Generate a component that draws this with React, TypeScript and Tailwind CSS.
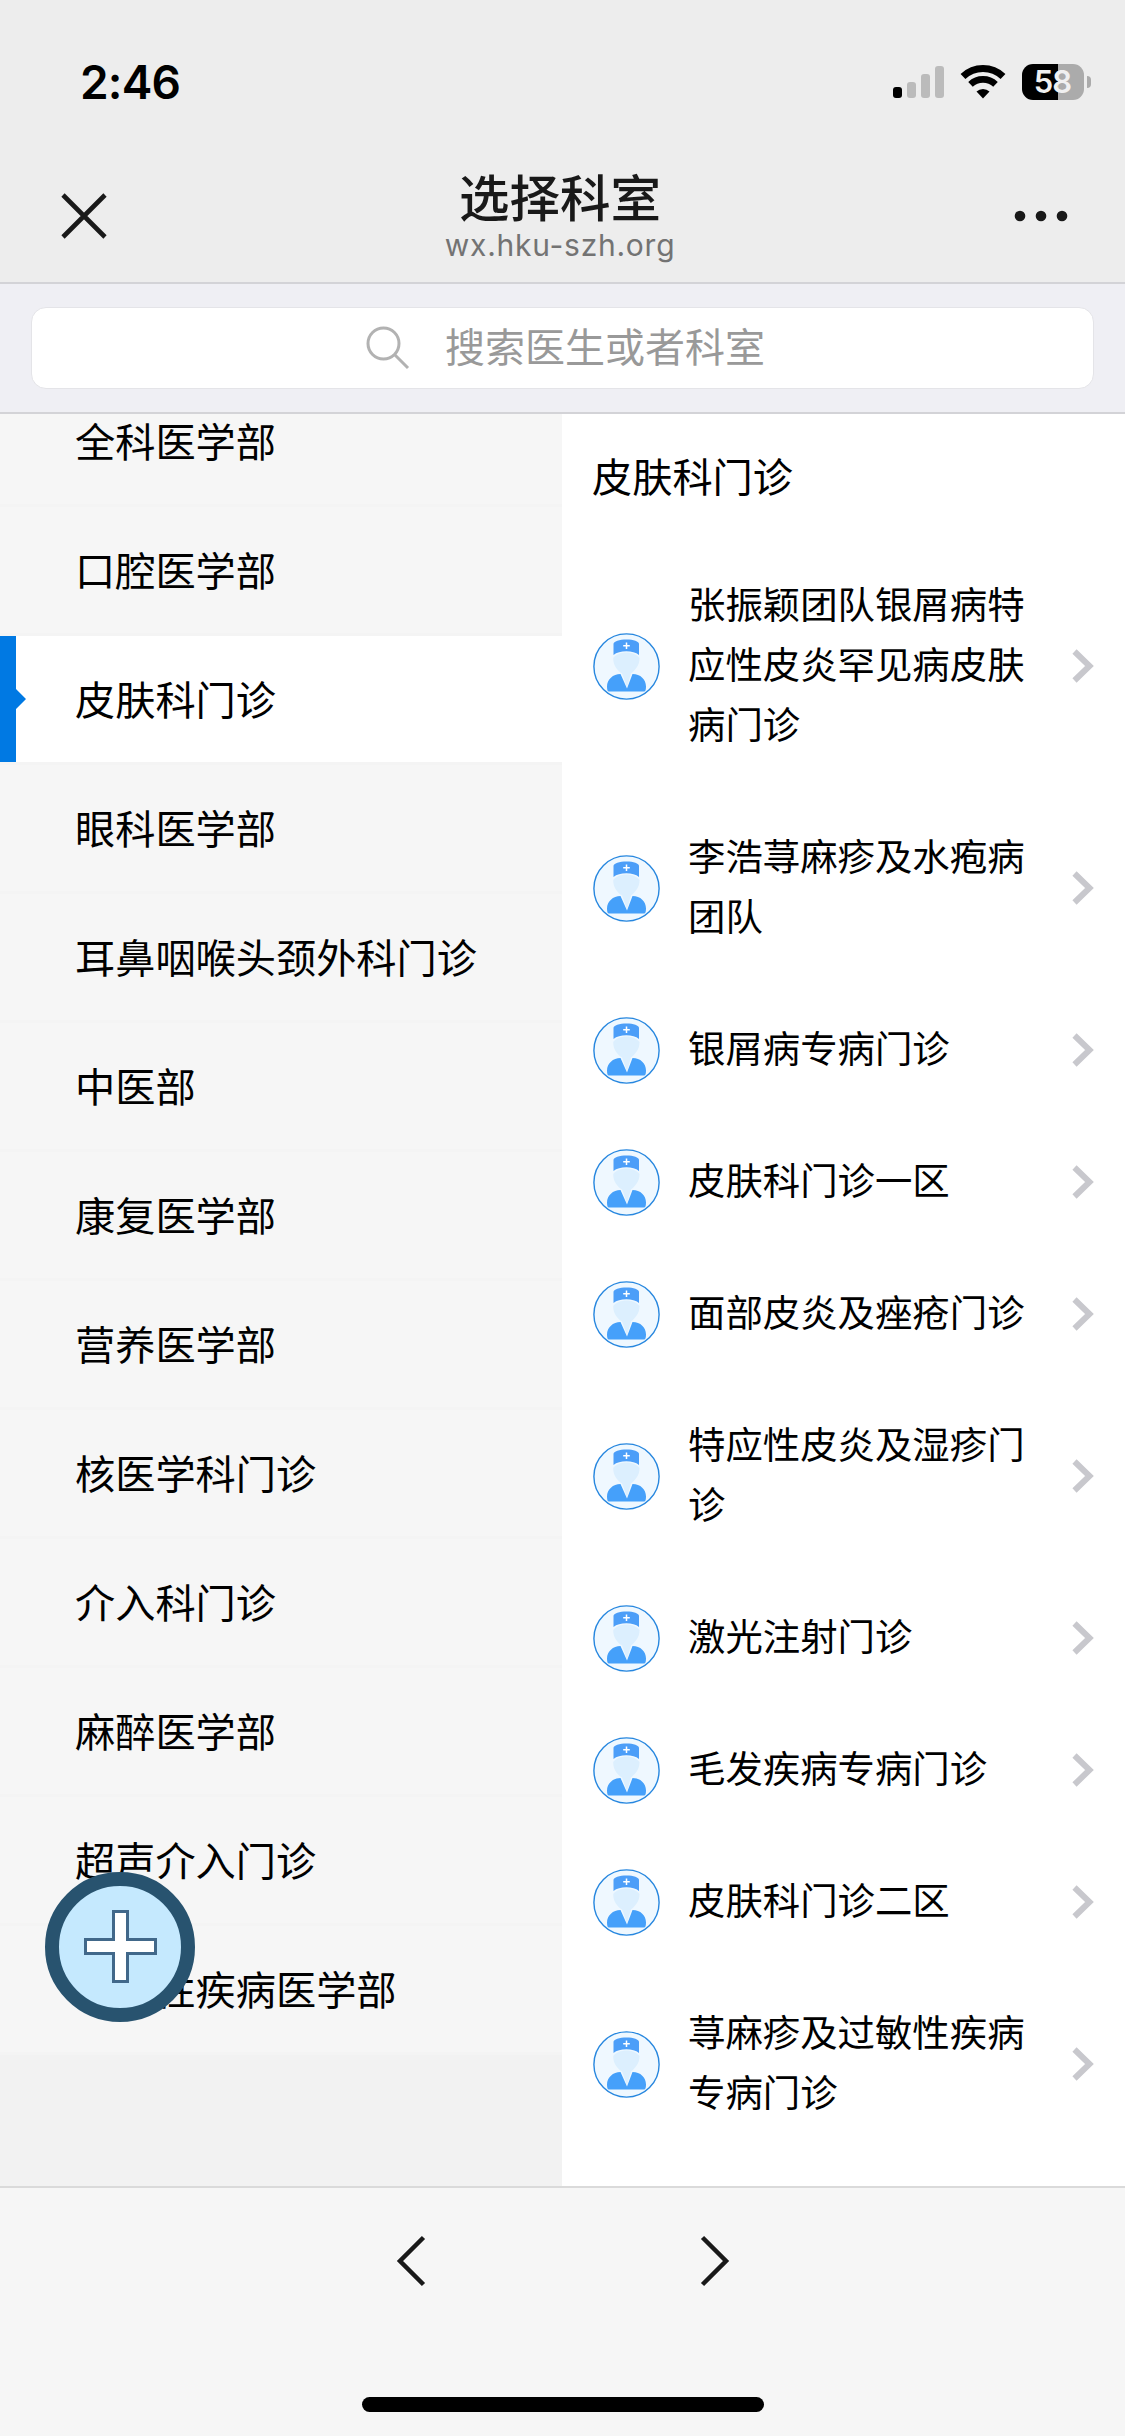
type Clinic = {
  name: string;
};

const departments: string[] = [
  '全科医学部',
  '口腔医学部',
  '皮肤科门诊',
  '眼科医学部',
  '耳鼻咽喉头颈外科门诊',
  '中医部',
  '康复医学部',
  '营养医学部',
  '核医学科门诊',
  '介入科门诊',
  '麻醉医学部',
  '超声介入门诊',
  '感染性疾病医学部',
];

const clinics: Clinic[] = [
  { name: '张振颖团队银屑病特应性皮炎罕见病皮肤病门诊' },
  { name: '李浩荨麻疹及水疱病团队' },
  { name: '银屑病专病门诊' },
  { name: '皮肤科门诊一区' },
  { name: '面部皮炎及痤疮门诊' },
  { name: '特应性皮炎及湿疹门诊' },
  { name: '激光注射门诊' },
  { name: '毛发疾病专病门诊' },
  { name: '皮肤科门诊二区' },
  { name: '荨麻疹及过敏性疾病专病门诊' },
];

const active = '皮肤科门诊';

function StatusBar() {
  return (
    <div className="flex h-[164px] items-start justify-between pl-[80px] pr-[34px] pt-[64px] font-['Inter',sans-serif]">
      <span className="text-[46px] font-semibold leading-[36px] tracking-[-0.8px] text-black">2:46</span>
      <div className="flex h-9 items-center">
        <svg className="h-9 w-[51px]" viewBox="0 0 51 36">
          <rect x="0" y="23" width="9" height="11" rx="3" fill="#000" />
          <rect x="14" y="18" width="9" height="16" rx="3" fill="#bbb" />
          <rect x="28" y="10" width="9" height="24" rx="3" fill="#bbb" />
          <rect x="42" y="2" width="9" height="32" rx="3" fill="#bbb" />
        </svg>
        <svg className="ml-4 h-9 w-[46px]" viewBox="0 0 46 36" fill="none">
          <path d="M3 12.5a29 29 0 0 1 40 0" stroke="#000" strokeWidth="7" />
          <path d="M10.5 20.3a18.2 18.2 0 0 1 25 0" stroke="#000" strokeWidth="6.6" />
          <path d="M16.5 27.5a9.5 9.5 0 0 1 13 0L23 34.5z" fill="#000" />
        </svg>
        <div className="ml-4 flex h-9 w-[62px] items-center justify-center rounded-[11px] bg-[linear-gradient(to_right,#000_36px,#ababab_36px)] pr-px text-[31px] font-semibold tracking-[-1px] text-[#f0f0f0]">
          58
        </div>
        <div className="ml-[3px] h-3 w-1 rounded-r-full bg-[#ababab]" />
      </div>
    </div>
  );
}

function TitleBar() {
  return (
    <div className="flex h-[118px] items-start justify-between px-[56px]">
      <svg className="mt-[24px] h-14 w-14" viewBox="0 0 56 56" fill="none" stroke="#191919" strokeWidth="4.6">
        <path d="M7 7l42 42M49 7L7 49" />
      </svg>
      <div className="flex flex-col items-center pr-[5px]">
        <h1 className="mt-[6px] text-[50.5px] font-medium leading-[50px] text-[#191919]">选择科室</h1>
        <p className="mt-3 font-['Inter',sans-serif] text-[30px] leading-[26px] tracking-[0.75px] text-[#737373]">wx.hku-szh.org</p>
      </div>
      <svg className="mt-[24px] h-14 w-14" viewBox="0 0 56 56" fill="#191919">
        <circle cx="7" cy="28" r="5.3" />
        <circle cx="28" cy="28" r="5.3" />
        <circle cx="49" cy="28" r="5.3" />
      </svg>
    </div>
  );
}

function SearchBar() {
  return (
    <div className="h-[132px] border-y-2 border-[#d3d3d7] bg-[#efeff4] px-[31px] pt-[23px]">
      <div className="flex h-[82px] items-center rounded-[15px] border border-[#e4e4e8] bg-white pl-[334px]">
        <svg className="h-[44px] w-[44px]" viewBox="0 0 44 44" fill="none" stroke="#b2b2b2" strokeWidth="3">
          <circle cx="17.5" cy="17.5" r="15.5" />
          <path d="M28.5 28.5L42 42" />
        </svg>
        <span className="ml-[35px] pb-[6px] text-[40px] text-[#999]">搜索医生或者科室</span>
      </div>
    </div>
  );
}

function DoctorIcon() {
  return (
    <svg className="-my-1 h-[67px] w-[67px] shrink-0" viewBox="0 0 67 67">
      <circle cx="33.5" cy="33.5" r="32.6" fill="#eff8ff" stroke="#2787df" strokeWidth="1.4" />
      <path d="M20.5 22V11c0-2.5 6-4.5 13-4.5S46 8.500 46 11v11c-3-2.5-7.5-3.700-12.700-3.700S23.500 19.500 20.500 22z" fill="#4c9ef8" />
      <path d="M33.5 9.500v6.600M30.200 12.800h6.600" stroke="#fff" strokeWidth="1.5" />
      <path d="M20.2 25c2.500-3.500 7.500-5.600 13.100-5.600S44 21.500 46.500 25c.3 8-5.500 13-8.500 15.500L34 54l-5-13.500C25 38 20 33 20.200 25z" fill="#dceffe" />
      <path d="M27.5 41L34 55.500 39.500 41c8 0 13.500 5.500 13.500 12.500 0 3-.5 5-2 5H16c-1.500 0-2-2-2-5C14 46.500 20 41 27.500 41z" fill="#45a0fa" />
    </svg>
  );
}

function DepartmentList() {
  return (
    <nav className="w-[562px] shrink-0 overflow-hidden bg-[#f2f2f2]">
      {/* list is scrolled, the first row slides under the search bar */}
      <ul className="-mt-[36px]">
        {departments.map((name) => (
          <li
            key={name}
            className={`relative flex h-[129px] items-center border-b-[3px] border-[#f4f4f4] pb-[3px] pl-[75px] text-[40.2px] leading-[44px] ${name === active ? 'bg-white' : 'bg-[#f6f6f6]'}`}
          >
            {name === active && (
              <svg className="absolute left-0 top-0 h-[126px] w-[26px]" viewBox="0 0 26 126" fill="#0079e3">
                <path d="M0 0h16v53l10 10-10 10v53H0z" />
              </svg>
            )}
            {name}
          </li>
        ))}
      </ul>
    </nav>
  );
}

function ClinicList() {
  return (
    <section className="flex-1 bg-white px-[31px]">
      <h2 className="-ml-px flex h-[126px] items-center pb-[3px] text-[40.2px]">皮肤科门诊</h2>
      <ul>
        {clinics.map(({ name }) => (
          <li key={name} className="flex items-center py-[36px]">
            <DoctorIcon />
            <span className="-mt-[3px] mb-[3px] ml-[28px] w-[342px] text-[37.4px] leading-[60px]">{name}</span>
            <svg className="ml-auto h-9 w-[22px]" viewBox="0 0 22 36" fill="none" stroke="#c8c8cd" strokeWidth="6">
              <path d="M2.5 3.500L17.500 18l-15 14.500" />
            </svg>
          </li>
        ))}
      </ul>
    </section>
  );
}

function BottomBar() {
  return (
    <footer className="flex h-[250px] flex-col items-center border-t-2 border-[#dadada] bg-[#f6f6f6]">
      <div className="mt-[46px] flex gap-[272px]">
        <svg className="h-[54px] w-[32px]" viewBox="0 0 32 54" fill="none" stroke="#191919" strokeWidth="4.5">
          <path d="M28.5 3.500L5 27l23.500 23.500" />
        </svg>
        <svg className="h-[54px] w-[32px]" viewBox="0 0 32 54" fill="none" stroke="#191919" strokeWidth="4.5">
          <path d="M3.5 3.500L27 27 3.500 50.500" />
        </svg>
      </div>
      <div className="mt-[109px] h-[15px] w-[402px] rounded-full bg-black" />
    </footer>
  );
}

function FloatingButton() {
  return (
    <button className="absolute left-[45px] top-[1872px] h-[150px] w-[150px]">
      <svg className="h-full w-full" viewBox="0 0 150 150">
        <circle cx="75" cy="75" r="68" fill="#c5e9fe" stroke="#28536f" strokeWidth="14" />
        <path
          d="M68.5 39.500h14v28h28v14h-28v28h-14v-28h-28v-14h28z"
          fill="#fff"
          stroke="#41688a"
          strokeWidth="3"
        />
      </svg>
    </button>
  );
}

export default function App() {
  return (
    <div className="relative flex h-[2436px] w-[1125px] flex-col overflow-hidden bg-[#ededed] font-['Noto_Sans_CJK_SC',sans-serif] text-black">
      <StatusBar />
      <TitleBar />
      <SearchBar />
      <main className="flex min-h-0 flex-1 overflow-hidden">
        <DepartmentList />
        <ClinicList />
      </main>
      <BottomBar />
      <FloatingButton />
    </div>
  );
}
